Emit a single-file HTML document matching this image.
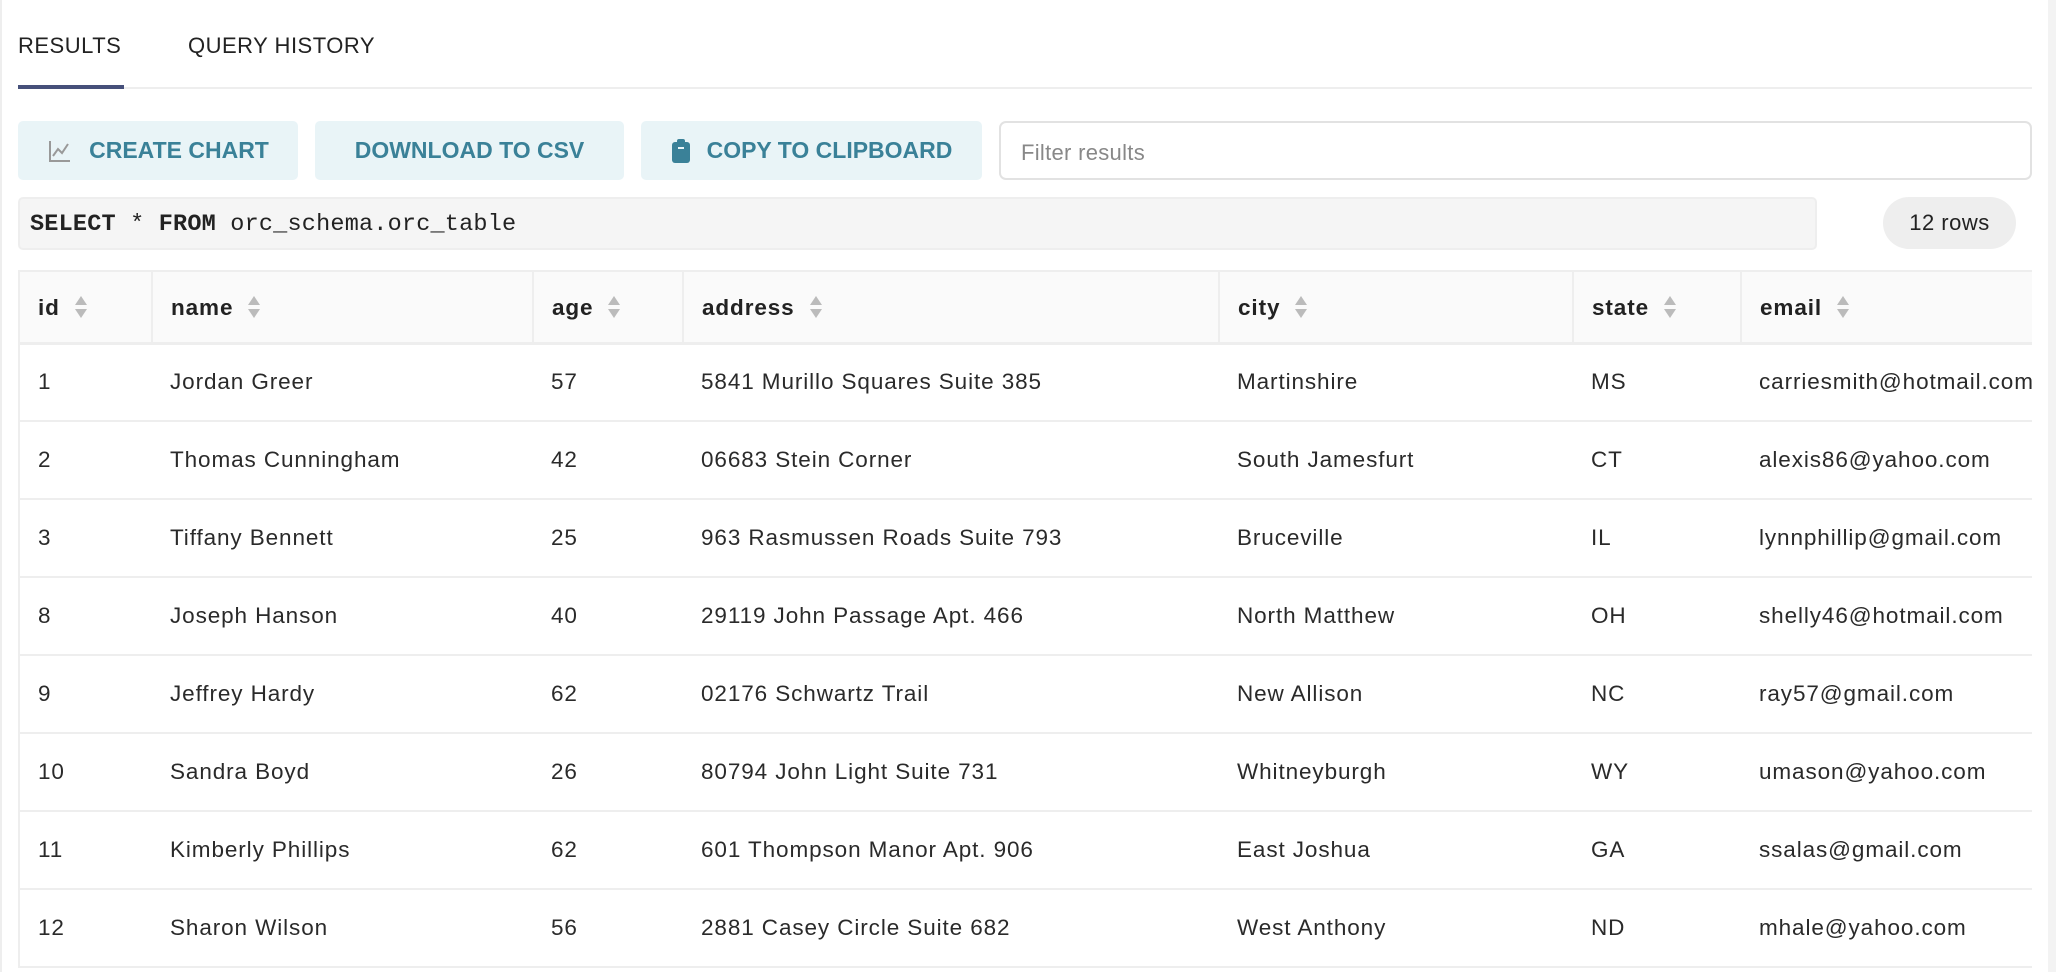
<!DOCTYPE html>
<html><head><style>
*{box-sizing:border-box;margin:0;padding:0}
body{width:2056px;height:972px;overflow:hidden;background:#fff;font-family:"Liberation Sans",sans-serif;color:#222;position:relative}
.abs{position:absolute}
.tab{font-size:22px;top:33px;letter-spacing:0.5px}
.btn{top:121px;height:59px;background:#e9f4f7;border-radius:5px;color:#3a8198;font-weight:bold;font-size:23px;display:flex;align-items:center;justify-content:center;gap:16px}
table{position:absolute;left:18px;top:270px;border-collapse:collapse;table-layout:fixed;width:2014px;border-left:2px solid #eee}
th,td{text-align:left;padding:0 0 0 18px;font-size:22.5px;letter-spacing:0.9px;white-space:nowrap;overflow:hidden}
th{height:72px;background:#fafafa;font-weight:bold;border-right:2px solid #eee;border-top:2px solid #eee;border-bottom:3px solid #eee;padding-top:4px}
td{height:78px;border-bottom:2px solid #eee;color:#2a2a2a}
.s{display:inline-block;vertical-align:middle;margin-left:14px;width:14px;height:26px;position:relative;top:-2px}
</style></head><body>
<div class="abs" style="left:0;top:0;width:2px;height:972px;background:#eee"></div>
<div class="abs" style="right:0;top:0;width:8px;height:972px;background:#f3f3f3"></div>
<div class="abs tab" style="left:18px">RESULTS</div>
<div class="abs tab" style="left:188px">QUERY HISTORY</div>
<div class="abs" style="left:18px;top:87px;width:2014px;height:2px;background:#eee"></div>
<div class="abs" style="left:18px;top:85px;width:106px;height:4px;background:#46507a"></div>

<div class="abs btn" style="left:18px;width:280px"><svg width="26" height="26" viewBox="0 0 26 26" fill="none" stroke="#999" stroke-width="2"><path d="M3 3v20h20"/><path d="M6 18l5-7 4 4 6-9"/></svg>CREATE CHART</div>
<div class="abs btn" style="left:315px;width:309px">DOWNLOAD TO CSV</div>
<div class="abs btn" style="left:641px;width:341px"><svg width="20" height="26" viewBox="0 0 20 26"><rect x="1" y="4" width="18" height="21" rx="3" fill="#3a8198"/><rect x="6" y="1" width="8" height="6" rx="2" fill="#3a8198"/><rect x="7" y="9" width="6" height="2" fill="#e9f4f7"/></svg>COPY TO CLIPBOARD</div>
<div class="abs" style="left:999px;top:121px;width:1033px;height:59px;border:2px solid #e2e2e2;border-radius:7px;font-size:22px;color:#888;padding:17px 0 0 20px;letter-spacing:0.3px">Filter results</div>

<div class="abs" style="left:18px;top:197px;width:1799px;height:53px;background:#f5f5f5;border:2px solid #eee;border-radius:5px;font-family:'Liberation Mono',monospace;font-size:23.5px;padding:12px 0 0 10px;letter-spacing:0.2px"><b>SELECT</b> * <b>FROM</b> orc_schema.orc_table</div>
<div class="abs" style="left:1883px;top:197px;width:133px;height:52px;background:#eee;border-radius:26px;font-size:22px;text-align:center;line-height:52px;letter-spacing:0.5px">12 rows</div>

<table>
<colgroup><col style="width:133px"><col style="width:381px"><col style="width:150px"><col style="width:536px"><col style="width:354px"><col style="width:168px"><col></colgroup>
<tr>
<th>id<svg class="s" viewBox="0 0 14 26"><path d="M7 2l6 9H1z M7 24l6-9H1z" fill="#bbb"/></svg></th>
<th>name<svg class="s" viewBox="0 0 14 26"><path d="M7 2l6 9H1z M7 24l6-9H1z" fill="#bbb"/></svg></th>
<th>age<svg class="s" viewBox="0 0 14 26"><path d="M7 2l6 9H1z M7 24l6-9H1z" fill="#bbb"/></svg></th>
<th>address<svg class="s" viewBox="0 0 14 26"><path d="M7 2l6 9H1z M7 24l6-9H1z" fill="#bbb"/></svg></th>
<th>city<svg class="s" viewBox="0 0 14 26"><path d="M7 2l6 9H1z M7 24l6-9H1z" fill="#bbb"/></svg></th>
<th>state<svg class="s" viewBox="0 0 14 26"><path d="M7 2l6 9H1z M7 24l6-9H1z" fill="#bbb"/></svg></th>
<th style="border-right:none">email<svg class="s" viewBox="0 0 14 26"><path d="M7 2l6 9H1z M7 24l6-9H1z" fill="#bbb"/></svg></th>
</tr>
<tr><td>1</td><td>Jordan Greer</td><td>57</td><td>5841 Murillo Squares Suite 385</td><td>Martinshire</td><td>MS</td><td>carriesmith@hotmail.com</td></tr>
<tr><td>2</td><td>Thomas Cunningham</td><td>42</td><td>06683 Stein Corner</td><td>South Jamesfurt</td><td>CT</td><td>alexis86@yahoo.com</td></tr>
<tr><td>3</td><td>Tiffany Bennett</td><td>25</td><td>963 Rasmussen Roads Suite 793</td><td>Bruceville</td><td>IL</td><td>lynnphillip@gmail.com</td></tr>
<tr><td>8</td><td>Joseph Hanson</td><td>40</td><td>29119 John Passage Apt. 466</td><td>North Matthew</td><td>OH</td><td>shelly46@hotmail.com</td></tr>
<tr><td>9</td><td>Jeffrey Hardy</td><td>62</td><td>02176 Schwartz Trail</td><td>New Allison</td><td>NC</td><td>ray57@gmail.com</td></tr>
<tr><td>10</td><td>Sandra Boyd</td><td>26</td><td>80794 John Light Suite 731</td><td>Whitneyburgh</td><td>WY</td><td>umason@yahoo.com</td></tr>
<tr><td>11</td><td>Kimberly Phillips</td><td>62</td><td>601 Thompson Manor Apt. 906</td><td>East Joshua</td><td>GA</td><td>ssalas@gmail.com</td></tr>
<tr><td>12</td><td>Sharon Wilson</td><td>56</td><td>2881 Casey Circle Suite 682</td><td>West Anthony</td><td>ND</td><td>mhale@yahoo.com</td></tr>
</table>
</body></html>
